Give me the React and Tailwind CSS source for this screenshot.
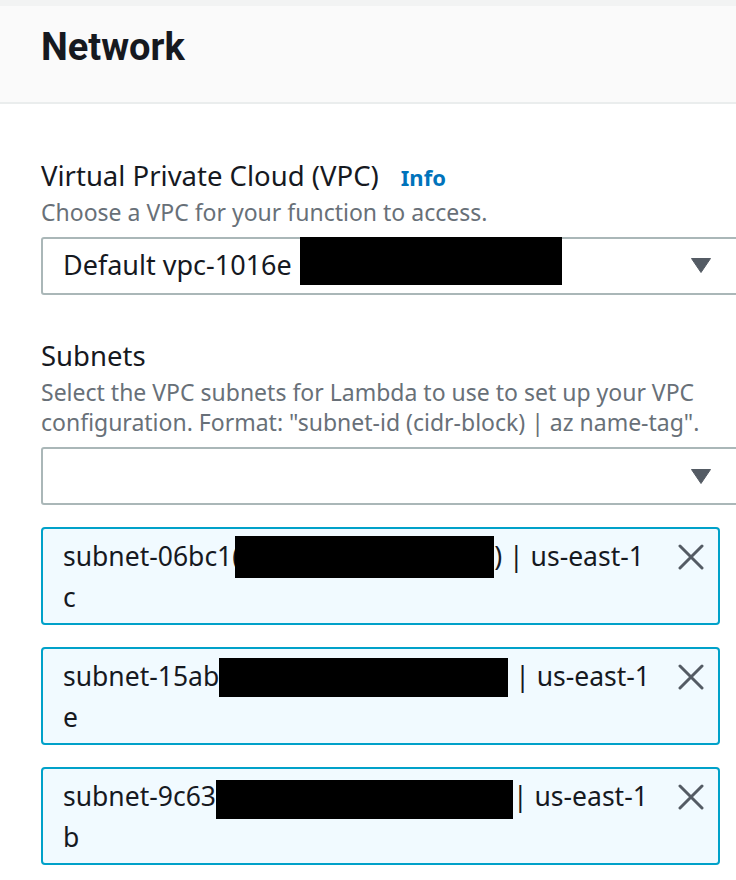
import React from "react";

const font = { fontFamily: "'Noto Sans', Roboto, sans-serif" };
const headFont = { fontFamily: "Roboto, 'Noto Sans', sans-serif" };

function Caret() {
  return (
    <svg width="20" height="15" viewBox="0 0 20 15" className="shrink-0">
      <polygon points="0.5,0.5 19.5,0.5 10,14.5" fill="#545b64" stroke="#545b64" strokeLinejoin="round" />
    </svg>
  );
}

function XIcon() {
  return (
    <svg width="26" height="26" viewBox="0 0 26 26" className="shrink-0">
      <path d="M2 2 L24 24 M24 2 L2 24" stroke="#545b64" strokeWidth="3" strokeLinecap="round" fill="none" />
    </svg>
  );
}

function Token({ pre, redactW, redactH, redactTop, redactMl, post, second }) {
  return (
    <div className="flex items-start justify-between w-[679px] h-[98px] rounded-[4px] border-2 border-[#00a1c9] bg-[#f1faff] pl-[20px] pr-[14px] pt-[7px]">
      <div className="text-[26.5px] leading-[41px] text-[#16191f]">
        <div className="whitespace-nowrap">
          <span>{pre}</span>
          <span
            className="inline-block bg-black align-middle relative -my-[10px]"
            style={{ width: redactW, height: redactH, top: redactTop, marginLeft: redactMl }}
          />
          <span>{post}</span>
        </div>
        <div>{second}</div>
      </div>
      <div className="pt-[8px]">
        <XIcon />
      </div>
    </div>
  );
}

export default function App() {
  return (
    <div className="w-[736px] h-[880px] bg-white overflow-hidden" style={font}>
      <div className="h-[6px] bg-[#f2f3f3]" />
      <div className="h-[98px] bg-[#fafafa] border-b-2 border-[#eaeded] pl-[41px] pt-[19px]">
        <h2 className="text-[38px] leading-[44px] font-bold text-[#16191f]" style={headFont}>Network</h2>
      </div>
      <div className="pl-[41px]">
        <div className="mt-[54px] flex items-baseline gap-[22px]">
          <span className="text-[27.5px] leading-[36px] text-[#16191f]">Virtual Private Cloud (VPC)</span>
          <span className="text-[22px] leading-[36px] font-bold text-[#0073bb]">Info</span>
        </div>
        <div className="mt-[2px] text-[23px] leading-[30px] text-[#687078]">Choose a VPC for your function to access.</div>
        <div className="relative mt-[10px] w-[700px] h-[58px] rounded-[3px] border-2 border-[#aab7b8] bg-white flex items-center justify-between pl-[20px] pr-[28px] pb-[2px]">
          <span className="text-[27px] text-[#16191f] whitespace-nowrap">Default vpc-1016e</span>
          <div className="absolute left-[257px] top-[-2px] w-[262px] h-[48px] bg-black" />
          <Caret />
        </div>

        <div className="mt-[43px] text-[27.5px] leading-[36px] text-[#16191f]">Subnets</div>
        <div className="mt-[3px] text-[23px] leading-[30px] text-[#687078] w-[685px]">
          Select the VPC subnets for Lambda to use to set up your VPC configuration. Format: "subnet-id (cidr-block) | az name-tag".
        </div>
        <div className="mt-[10px] w-[700px] h-[58px] rounded-[3px] border-2 border-[#aab7b8] bg-white flex items-center justify-end pr-[28px]">
          <Caret />
        </div>

        <div className="mt-[22px] flex flex-col gap-[22px]">
          <Token pre="subnet-06bc1(" redactW={259} redactH={42} redactTop={-2} redactMl={-5} post=") | us-east-1" second="c" />
          <Token pre="subnet-15ab" redactW={289} redactH={39} redactTop={-1} redactMl={0} post=" | us-east-1" second="e" />
          <Token pre="subnet-9c63" redactW={297} redactH={39} redactTop={1} redactMl={0} post="| us-east-1" second="b" />
        </div>
      </div>
    </div>
  );
}
